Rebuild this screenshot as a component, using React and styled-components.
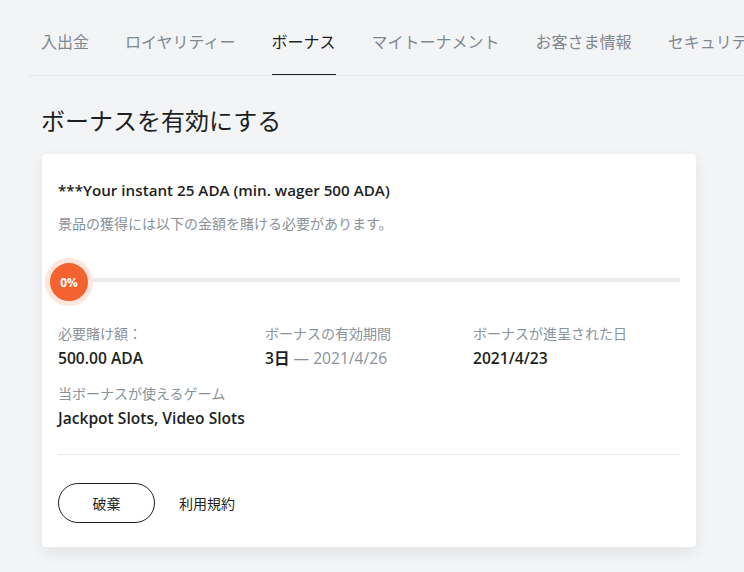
import React from "react";
import styled, { createGlobalStyle } from "styled-components";

const Global = createGlobalStyle`
  html, body { margin: 0; padding: 0; background: #f3f4f6; }
  body { font-family: "Open Sans", "Noto Sans CJK JP", sans-serif; color: #1d1f22; }
`;

const Page = styled.div`
  width: 744px;
  height: 572px;
  overflow: hidden;
  background: #f3f4f6;
`;

const Tabs = styled.nav`
  display: flex;
  gap: 36px;
  margin-left: 28px;
  padding-left: 13px;
  padding-top: 29px;
  border-bottom: 1px solid #e6e8eb;
  white-space: nowrap;
  overflow: hidden;
`;

const Tab = styled.div`
  font-family: "Noto Sans CJK JP", sans-serif;
  font-size: 16px;
  line-height: 24px;
  padding-bottom: 21px;
  color: ${(p) => (p.$active ? "#1d1f22" : "#7f8891")};
  border-bottom: 2px solid ${(p) => (p.$active ? "#1d1f22" : "transparent")};
  margin-bottom: -1px;
  flex-shrink: 0;
`;

const Main = styled.div`
  padding: 26px 48px 0 41px;
`;

const Heading = styled.h1`
  margin: 0 0 16px;
  font-family: "Noto Sans CJK JP", sans-serif;
  font-size: 24px;
  font-weight: 400;
  line-height: 36px;
  color: #1d1f22;
`;

const Card = styled.section`
  margin-left: 1px;
  width: 654px;
  box-sizing: border-box;
  background: #fff;
  border-radius: 4px;
  box-shadow: 0 6px 16px rgba(0, 0, 0, 0.07);
  padding: 24px 16px 24px 16px;
`;

const Title = styled.div`
  font-size: 15.2px;
  font-weight: 600;
  line-height: 24px;
  color: #1d1f22;
`;

const Sub = styled.div`
  margin-top: 12px;
  font-size: 14px;
  line-height: 20px;
  color: #8a929a;
`;

const Progress = styled.div`
  position: relative;
  margin-top: 30px;
  height: 36px;
  display: flex;
  align-items: center;
`;

const Track = styled.div`
  flex: 1;
  height: 4px;
  background: #e9ecee;
  margin-top: -4px;
`;

const Knob = styled.div`
  position: absolute;
  left: -13px;
  top: -6px;
  width: 38px;
  height: 38px;
  border-radius: 50%;
  background: #f4622f;
  border: 5px solid #fde6dc;
  box-sizing: content-box;
  color: #fff;
  font-size: 12px;
  font-weight: 700;
  display: flex;
  align-items: center;
  justify-content: center;
`;

const Grid = styled.div`
  margin-top: 24px;
  display: grid;
  grid-template-columns: 207px 208px 1fr;
  row-gap: 16px;
`;

const Label = styled.div`
  font-size: 14px;
  line-height: 20px;
  color: #8a929a;
`;

const Value = styled.div`
  margin-top: 4px;
  font-size: 15.6px;
  font-weight: 600;
  line-height: 20px;
  color: #1d1f22;
`;

const Muted = styled.span`
  font-weight: 400;
  color: #8a929a;
`;

const Divider = styled.hr`
  margin: 26px 0 0;
  border: 0;
  border-top: 1px solid #e9ecee;
`;

const Actions = styled.div`
  display: flex;
  align-items: center;
  gap: 24px;
  margin-top: 28px;
`;

const Button = styled.button`
  width: 97px;
  height: 40px;
  border-radius: 20px;
  border: 1px solid #1d1f22;
  background: #fff;
  font-family: "Noto Sans CJK JP", sans-serif;
  font-size: 14px;
  color: #1d1f22;
  cursor: pointer;
`;

const Link = styled.span`
  font-family: "Noto Sans CJK JP", sans-serif;
  font-size: 14px;
  color: #1d1f22;
`;

const FullRow = styled.div`
  grid-column: 1 / span 3;
`;

export default function App() {
  const tabs = ["入出金", "ロイヤリティー", "ボーナス", "マイトーナメント", "お客さま情報", "セキュリティ"];
  return (
    <Page>
      <Global />
      <Tabs>
        {tabs.map((t) => (
          <Tab key={t} $active={t === "ボーナス"}>{t}</Tab>
        ))}
      </Tabs>
      <Main>
        <Heading>ボーナスを有効にする</Heading>
        <Card>
          <Title>***Your instant 25 ADA (min. wager 500 ADA)</Title>
          <Sub>景品の獲得には以下の金額を賭ける必要があります。</Sub>
          <Progress>
            <Track />
            <Knob>0%</Knob>
          </Progress>
          <Grid>
            <div>
              <Label>必要賭け額：</Label>
              <Value>500.00 ADA</Value>
            </div>
            <div>
              <Label>ボーナスの有効期間</Label>
              <Value>3日 <Muted>— 2021/4/26</Muted></Value>
            </div>
            <div>
              <Label>ボーナスが進呈された日</Label>
              <Value>2021/4/23</Value>
            </div>
            <FullRow>
              <Label>当ボーナスが使えるゲーム</Label>
              <Value>Jackpot Slots, Video Slots</Value>
            </FullRow>
          </Grid>
          <Divider />
          <Actions>
            <Button>破棄</Button>
            <Link>利用規約</Link>
          </Actions>
        </Card>
      </Main>
    </Page>
  );
}
